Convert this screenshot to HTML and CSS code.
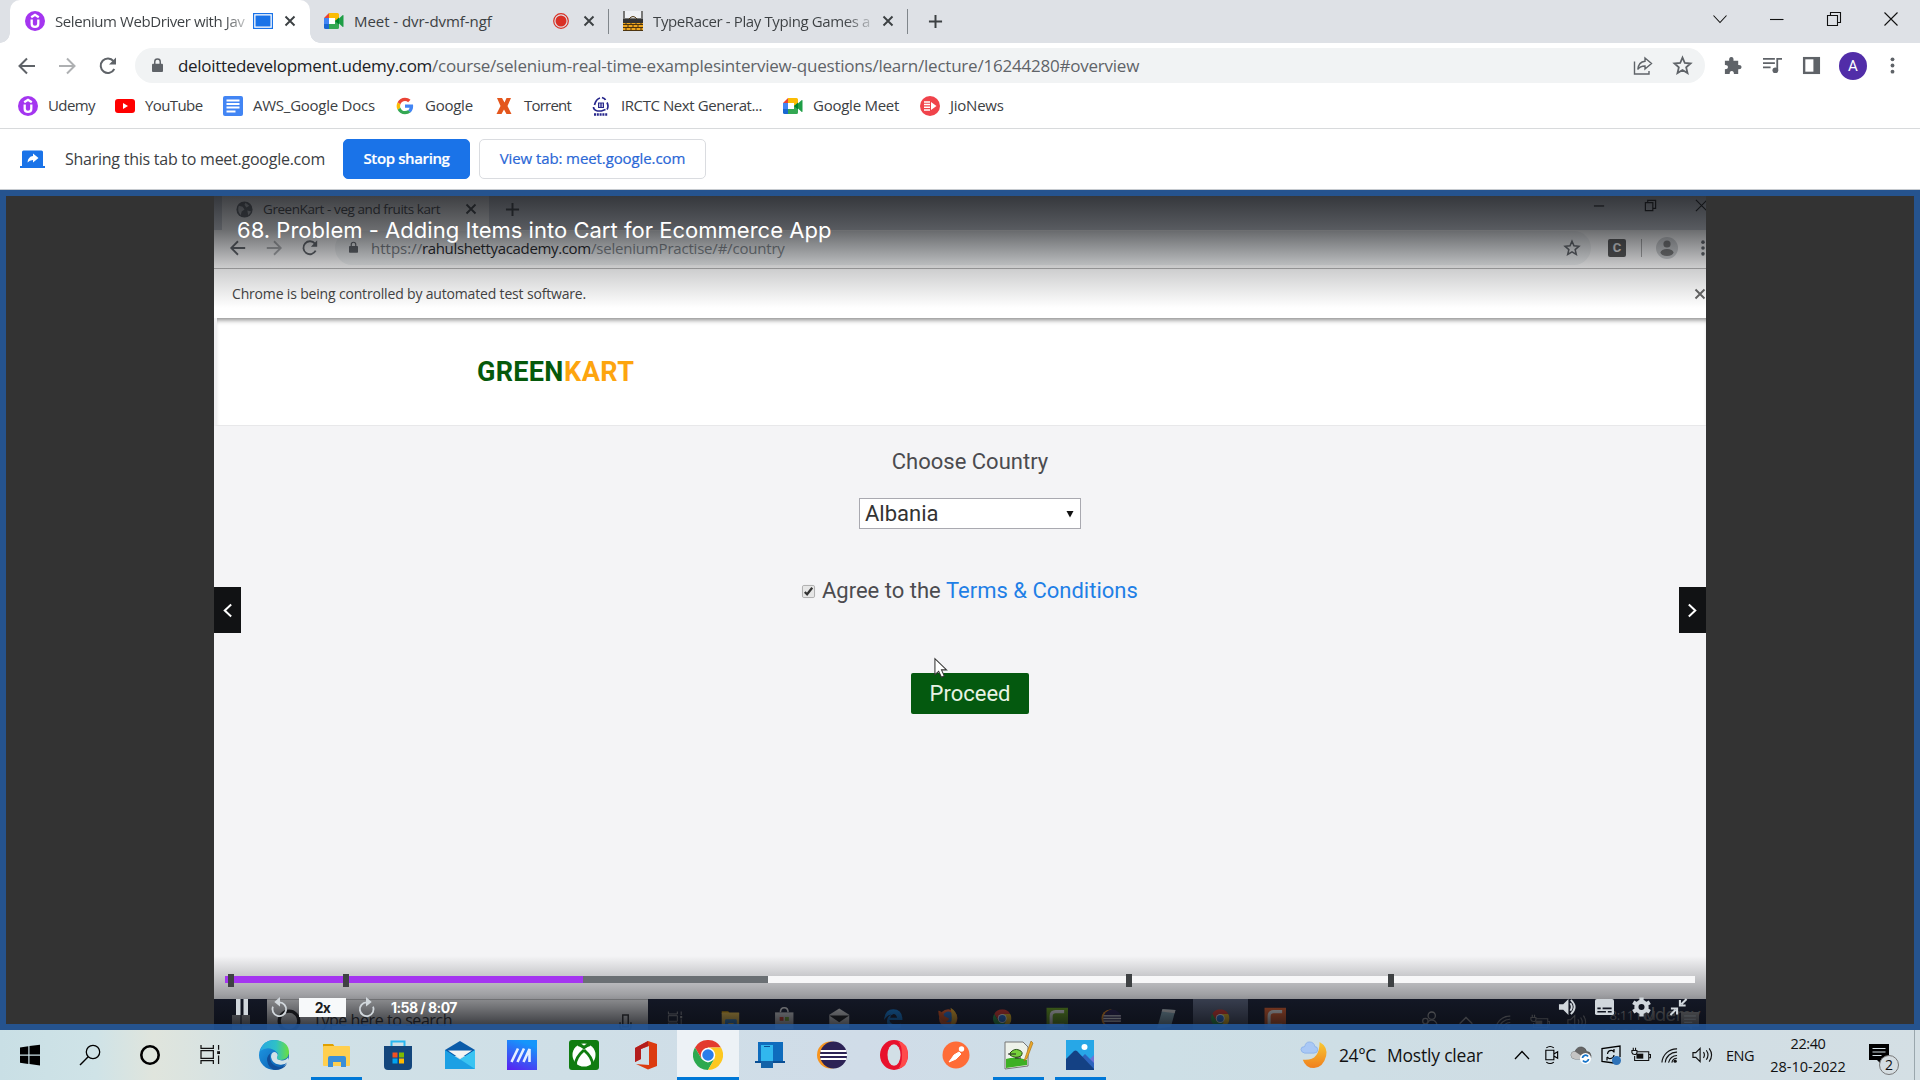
FILE: index.html
```html
<!DOCTYPE html>
<html lang="en">
<head>
<meta charset="utf-8">
<title>Selenium WebDriver with Java</title>
<link rel="stylesheet" href="styles.css">
</head>
<body>
<svg class="defs" width="0" height="0">
  <symbol id="udemy" viewBox="0 0 20 20"><circle cx="10" cy="10" r="10" fill="#a435f0"/><path d="M6.200 6.200 10 3.800l3.800 2.400M6.700 8.600v4.200c0 4.200 6.600 4.200 6.600 0V8.600" fill="none" stroke="#fff" stroke-width="2.300"/></symbol>
  <symbol id="close" viewBox="0 0 12 12"><path d="M1.5 1.5l9 9M10.5 1.5l-9 9" stroke="currentColor" stroke-width="1.9" fill="none"/></symbol>
  <symbol id="plus" viewBox="0 0 16 16"><path d="M8 1v14M1 8h14" stroke="currentColor" stroke-width="2.1"/></symbol>
  <symbol id="meet" viewBox="0 0 20 16"><path d="M0 5 5 0v5z" fill="#ea4335"/><path d="M5 0h8.500q1.500 0 1.500 1.500V8l-4 1V5H5z" fill="#fbbc04"/><path d="M0 5h5v6H0z" fill="#4285f4"/><path d="M0 11h5v5H1.500Q0 16 0 14.500z" fill="#1967d2"/><path d="M5 16v-5h6V8l4-1v7.500q0 1.500-1.500 1.500z" fill="#34a853"/><path d="M5 5h6v6H5z" fill="#fff"/><path d="M15 5.500 18.500 2.300q1-.6 1 .4v10.600q0 1-1 .4L15 10.500 11 8z" fill="#1e9e46"/><path d="M11 8l4-3.500v7z" fill="#00832d"/></symbol>
  <symbol id="back" viewBox="0 0 20 20"><path d="M18 10H3M10 2.500 2.500 10l7.500 7.500" fill="none" stroke="currentColor" stroke-width="2"/></symbol>
  <symbol id="fwd" viewBox="0 0 20 20"><path d="M2 10h15M10 2.500 17.500 10 10 17.500" fill="none" stroke="currentColor" stroke-width="2"/></symbol>
  <symbol id="reload" viewBox="0 0 20 20"><path d="M16.300 13A7.200 7.200 0 1 1 15.500 5.200" fill="none" stroke="currentColor" stroke-width="2"/><path d="M18 1.500V8.500H11z" fill="currentColor"/></symbol>
  <symbol id="lock" viewBox="0 0 12 16"><path d="M1 6h10q1 0 1 1v7q0 1-1 1H1q-1 0-1-1V7q0-1 1-1z" fill="currentColor"/><path d="M3 7V4a3 3 0 0 1 6 0v3" fill="none" stroke="currentColor" stroke-width="1.600"/></symbol>
  <symbol id="star" viewBox="0 0 20 20"><path d="M10 2.500 12.200 7.600 17.700 8.100 13.500 11.800 14.800 17.200 10 14.300 5.200 17.200 6.500 11.800 2.300 8.100 7.800 7.600z" fill="none" stroke="currentColor" stroke-width="1.700"/></symbol>
  <symbol id="chrome" viewBox="1 1 22 22"><path d="M2.470 6.500A11 11 0 0 1 21.530 6.500H12L7.240 14.750z" fill="#e33b2e"/><path d="M2.470 6.500 7.240 14.750 12 17.500l4.760-2.750L12 23A11 11 0 0 1 2.470 6.500z" fill="#2da94f"/><path d="M21.530 6.500A11 11 0 0 1 12 23l4.760-8.250L12 6.500z" fill="#fdc820"/><circle cx="12" cy="12" r="5.300" fill="#fff"/><circle cx="12" cy="12" r="4.200" fill="#2a7de9"/></symbol>
  <symbol id="eclipse" viewBox="0 0 30 30"><circle cx="13.500" cy="15" r="13.500" fill="#f7941e"/><circle cx="16.500" cy="15" r="13.500" fill="#2c2255"/><path d="M3.500 11h26M3 15h27M3.500 19h26" stroke="#fff" stroke-width="1.900"/></symbol>
  <symbol id="folder" viewBox="0 0 28 26"><path d="M1 2h10l2 3H1z" fill="#e0a000"/><rect x="1" y="4" width="27" height="20" rx="1" fill="#ffcf4f"/><path d="M6 25V16q0-2 2-2h14q2 0 2 2v9h-5v-5h-8v5z" fill="#3b8fd8"/></symbol>
  <symbol id="battery" viewBox="0 0 22 16"><path d="M6 4.500h13.500v9.500H4V9M19.500 7.500H21.500v3.500h-2M2.500 0v3M5 0v3M1 3h5.500v2.500q0 2-2.500 2T1 5.500z" fill="none" stroke="currentColor" stroke-width="1.200"/><path d="M6 6.500h7.500V12H6z" fill="currentColor"/></symbol>
  <symbol id="wifi" viewBox="0 0 18 18"><path d="M1 17A15.500 15.500 0 0 1 17 2.500M4.500 17A12 12 0 0 1 17 6M8 17a9 9 0 0 1 9-7.500M11.500 17a5.500 5.500 0 0 1 5.500-4.500" fill="none" stroke="currentColor" stroke-width="1.200"/><circle cx="15" cy="15.500" r="1.700" fill="currentColor"/></symbol>
  <symbol id="speaker" viewBox="0 0 22 18"><path d="M1 6.500h3L8.500 2v14L4 11.500H1zM12 6q2 3 0 6M15 4q3.500 5 0 10M18 2q5 7 0 14" fill="none" stroke="currentColor" stroke-width="1.200"/></symbol>
  <symbol id="taskview" viewBox="0 0 22 20"><path d="M1 0v3.500h13V0M1 20v-3.500h13V20M1 6h13v8H1zM19.500 0v5M19.500 11v9" fill="none" stroke="currentColor" stroke-width="1.300"/><path d="M18 6.500h3v3h-3z" fill="currentColor"/></symbol>
  <symbol id="note" viewBox="0 0 20 20"><path d="M0 0h20v16h-8v4l-4-4H0z" fill="currentColor"/><path d="M3.500 4.500h13M3.500 8h13M3.500 11.500h9" stroke="#d3e0e6" stroke-width="1.200"/></symbol>
</svg>

<header class="tabstrip">
  <div class="tab active">
    <svg class="fav"><use href="#udemy"/></svg>
    <span class="t tab-title fade tt1">Selenium WebDriver with Jav</span>
    <svg class="fav share" viewBox="0 0 20 16"><rect x=".6" y=".6" width="18.800" height="14.800" fill="#fff" stroke="#1a73e8" stroke-width="1.200"/><rect x="2.500" y="2.500" width="15" height="11" fill="#1a73e8"/></svg>
    <svg class="x"><use href="#close"/></svg>
  </div>
  <div class="tab second">
    <svg class="fav meet"><use href="#meet"/></svg>
    <span class="t tab-title tt2">Meet - dvr-dvmf-ngf</span>
    <svg class="rec" viewBox="0 0 16 16"><circle cx="8" cy="8" r="7.300" fill="none" stroke="#d93025" stroke-width="1.200"/><circle cx="8" cy="8" r="5.500" fill="#d93025"/></svg>
    <svg class="x"><use href="#close"/></svg>
  </div>
  <i class="sep"></i>
  <div class="tab third">
    <svg class="fav" viewBox="0 0 20 20"><rect width="20" height="20" fill="#777"/><path d="M2 0h16v7H2z" fill="#eef0f4"/><path d="M0 8h20v4H0z" fill="#333"/><path d="M0 12h20v8H0z" fill="#eda51d"/><path d="M6 8q4-5 8 0M0 13.500h20M0 16.500h20M0 19.500h20M3 12v2M8 12v2M13 12v2M18 12v2M5 14v3M10 14v3M15 14v3M3 17v3M8 17v3M13 17v3M18 17v3" fill="none" stroke="#4d3510"/></svg>
    <span class="t tab-title fade tt3">TypeRacer - Play Typing Games a</span>
    <svg class="x"><use href="#close"/></svg>
  </div>
  <i class="sep"></i>
  <svg class="new"><use href="#plus"/></svg>
  <div class="win">
    <svg viewBox="0 0 14 14"><path d="M.5 3.500 7 10.500 13.500 3.500" /></svg>
    <svg viewBox="0 0 14 14"><path d="M0 7.500h13.500"/></svg>
    <svg viewBox="0 0 14 14"><path d="M.5 3.500h10v10H.5zM3.500 3.500V.5h10v10h-3"/></svg>
    <svg viewBox="0 0 14 14"><path d="M.5.5l13 13M13.500.5l-13 13"/></svg>
  </div>
</header>

<nav class="toolbar">
  <svg class="nav"><use href="#back"/></svg>
  <svg class="nav dim"><use href="#fwd"/></svg>
  <svg class="nav"><use href="#reload"/></svg>
  <div class="omnibox">
    <svg class="lock"><use href="#lock"/></svg>
    <span class="t host">deloittedevelopment.udemy.com</span><span class="t path">/course/selenium-real-time-examplesinterview-questions/learn/lecture/16244280#overview</span>
    <svg class="tool share2" viewBox="0 0 20 20"><path d="M1.500 6v12.500h14.500V15.500" fill="none" stroke="#5f6368" stroke-width="1.400"/><path d="M12 2.500 18.500 8 12 13.500V10.500Q7 10.500 4.800 14 5.500 6.500 12 5.800z" fill="none" stroke="#5f6368" stroke-width="1.400"/></svg>
    <svg class="tool"><use href="#star"/></svg>
  </div>
  <div class="actions">
    <svg viewBox="0 0 20 20"><path d="M2 5h4.500q-.5-4 2.300-4T11 5h5v4.500q3.500-.3 3.500 2.300T16 14v5h-4.500q0-3.200-2.300-3.200T7 19H2v-5q3.200 0 3.200-2.300T2 9.500z" fill="#5f6368"/></svg>
    <svg viewBox="0 0 20 20"><path d="M0 3h12.500M0 7.500h12.500M0 12h8M15 15V3h5" fill="none" stroke="#5f6368" stroke-width="1.900"/><circle cx="13" cy="15" r="3" fill="#5f6368"/></svg>
    <svg viewBox="0 0 20 20"><path d="M1 1h18v18H1z" fill="#5f6368"/><path d="M3.500 3.500H12v13H3.500z" fill="#fff"/></svg>
    <span class="avatar">A</span>
    <svg viewBox="0 0 20 20" fill="#5f6368"><circle cx="10" cy="3.500" r="2"/><circle cx="10" cy="10" r="2"/><circle cx="10" cy="16.500" r="2"/></svg>
  </div>
</nav>

<nav class="bookmarks">
  <a class="b1"><svg class="fav"><use href="#udemy"/></svg><span class="t">Udemy</span></a>
  <a class="b2"><svg class="fav" viewBox="0 0 20 20"><rect y="3" width="20" height="14" rx="3" fill="#f00"/><path d="M8 7v6l5-3z" fill="#fff"/></svg><span class="t">YouTube</span></a>
  <a class="b3"><svg class="fav" viewBox="0 0 20 20"><rect width="20" height="20" rx="2" fill="#4285f4"/><path d="M3.500 4.500h13M3.500 8h13M3.500 11.500h13M3.500 15.500h9" stroke="#fff" stroke-width="1.800"/></svg><span class="t">AWS_Google Docs</span></a>
  <a class="b4"><svg class="fav" viewBox="0 0 48 48"><path fill="#ea4335" d="M24 12c3 0 5.500 1 7.500 2.900l5.700-5.700C33.700 6 29.200 4 24 4 16.200 4 9.400 8.500 6.200 15l6.600 5.100C14.400 15.400 18.800 12 24 12z"/><path fill="#4285f4" d="M43.500 24.500c0-1.500-.1-2.800-.4-4.100H24v8h11c-.5 2.500-1.900 4.700-4 6.200l6.400 5c3.800-3.500 6.100-8.700 6.100-15.100z"/><path fill="#fbbc05" d="M12.800 28.100a12 12 0 0 1 0-8L6.200 15a20 20 0 0 0 0 18.200z"/><path fill="#34a853" d="M24 44c5.400 0 9.900-1.800 13.200-4.800l-6.400-5c-1.800 1.200-4 1.900-6.800 1.900-5.200 0-9.600-3.500-11.200-8.200l-6.600 5.100C9.400 39.500 16.200 44 24 44z"/></svg><span class="t">Google</span></a>
  <a class="b5"><svg class="fav" viewBox="0 0 20 20"><path d="M3 2h5l2.500 4.500L12.500 2H17l-3.500 8 4 8h-5L10 13.500 7.500 18H2.500L6.500 10z" fill="#e4561c"/></svg><span class="t">Torrent</span></a>
  <a class="b6"><svg class="fav" viewBox="0 0 20 20"><path d="M3.500 9Q5 3 9 2M11 1.500q3 1 3.500 2.500M16 6.500q2 4 0 7M2.500 11q0 3 4 4h4l4-1.500" fill="none" stroke="#27278c" stroke-width="1.700"/><path d="M7 6.500h6v5.500H7z" fill="#27278c"/><path d="M8.800 7.500v3.500M11.200 7.500v3.500" stroke="#fff"/><path d="M3 18.500h14" stroke="#27278c" stroke-width="2.500" stroke-dasharray="2 .8"/></svg><span class="t">IRCTC Next Generat...</span></a>
  <a class="b7"><svg class="fav meet"><use href="#meet"/></svg><span class="t">Google Meet</span></a>
  <a class="b8"><svg class="fav" viewBox="0 0 20 20"><circle cx="10" cy="10" r="10" fill="#f0434b"/><path d="M4 6h6M4 8.600h6M4 11.300h6M4 14h6" stroke="#fff" stroke-width="1.500"/><path d="M11 6v8l5.500-4z" fill="#fff"/></svg><span class="t">JioNews</span></a>
</nav>

<section class="infobar">
  <svg class="sharing" viewBox="0 0 25 18"><path d="M3.500.5h18q1.500 0 1.500 1.500v14H2V2Q2 .5 3.500.5zM0 16h25v2H0z" fill="#1a73e8"/><path d="M13 3.500 18.500 8 13 12.500V10Q9.500 10 7.500 12.500 8 6.500 13 6z" fill="#fff"/></svg>
  <span class="t info-text">Sharing this tab to meet.google.com</span>
  <span class="btn primary"><span class="t">Stop sharing</span></span>
  <span class="btn"><span class="t">View tab: meet.google.com</span></span>
</section>

<main class="viewport">
  <div class="player">
    <div class="v-tabs">
      <svg class="v-globe" viewBox="0 0 20 20"><circle cx="10" cy="10" r="8.500" fill="#5f6368"/><path d="M4 6l4 1 2 3-3 2-1 4q-4-5-2-10zM11 3l4 3-3 2-2-3zM13 11l4 1-3 4z" fill="#c7cacd"/></svg>
      <span class="t">GreenKart - veg and fruits kart</span>
      <svg class="x"><use href="#close"/></svg>
      <svg class="new"><use href="#plus"/></svg>
      <div class="v-win">
        <svg viewBox="0 0 14 14"><path d="M1 7.500h11"/></svg>
        <svg viewBox="0 0 14 14"><path d="M1.500 4h8v8.500h-8zM4 4V1.500h8.500v8.500h-3"/></svg>
        <svg viewBox="0 0 14 14"><path d="M1 1l12 12M13 1l-12 12"/></svg>
      </div>
    </div>
    <div class="v-bar">
      <svg><use href="#back"/></svg><svg class="dim"><use href="#fwd"/></svg><svg><use href="#reload"/></svg>
      <div class="v-omni">
        <svg class="lock"><use href="#lock"/></svg>
        <span class="t scheme">https://</span><span class="t dark">rahulshettyacademy.com</span><span class="t rest-url">/seleniumPractise/#/country</span>
        <svg class="v-star"><use href="#star"/></svg>
      </div>
      <b class="badge">C</b><i class="v-sep"></i>
      <svg class="v-user" viewBox="0 0 22 22"><circle cx="11" cy="11" r="11" fill="#d0d2d4"/><circle cx="11" cy="7" r="3.600" fill="#777"/><ellipse cx="11" cy="15.500" rx="6.500" ry="3.500" fill="#777"/></svg>
      <svg class="v-dots" viewBox="0 0 20 20" fill="#5f6368"><circle cx="10" cy="3.500" r="2"/><circle cx="10" cy="10" r="2"/><circle cx="10" cy="16.500" r="2"/></svg>
    </div>
    <div class="v-info"><span class="t">Chrome is being controlled by automated test software.</span><svg class="x"><use href="#close"/></svg></div>
    <div class="v-head"><span class="t g">GREEN</span><span class="t k">KART</span></div>
    <div class="v-page">
      <p class="t choose">Choose Country</p>
      <div class="select"><span class="t">Albania</span><svg viewBox="0 0 8 8"><path d="M.5 1h7L4 7.500z" fill="#111"/></svg></div>
      <div class="agree"><svg viewBox="0 0 14 14"><rect x=".5" y=".5" width="13" height="13" rx="1.500" fill="#e6e6e6" stroke="#aaa"/><path d="M3 7.500 5.500 10 11 3" fill="none" stroke="#333" stroke-width="2.400"/></svg><span class="t">Agree to the</span><span class="t link">Terms &amp; Conditions</span></div>
      <div class="proceed"><span class="t">Proceed</span></div>
    </div>
    <div class="v-task">
      <div class="v-start"><svg viewBox="0 0 18 20" fill="#aaa"><path d="M0 0h8.400v9.400H0zM9.600 0H18v9.400H9.600zM0 10.600h8.400V20H0zM9.600 10.600H18V20H9.600z"/></svg></div>
      <div class="v-search"><svg class="v-cort" viewBox="0 0 22 22"><circle cx="11" cy="11" r="9" fill="none" stroke="#222" stroke-width="3"/></svg><span class="t">Type here to search</span>
        <svg class="v-mic" viewBox="0 0 14 22"><path d="M4 1h6v13H4zM1 9v5q0 4 6 4t6-4V9M7 18v4" fill="none" stroke="#333" stroke-width="1.600"/></svg></div>
      <div class="v-apps">
        <svg viewBox="0 0 30 30"><use href="#taskview" x="5" y="5" width="20" height="20" color="#aaa"/></svg>
        <svg viewBox="0 0 30 30"><use href="#folder" x="3" y="3" width="24" height="24"/></svg>
        <svg viewBox="0 0 30 30"><path d="M3 7h24v22H3z" fill="#ddd"/><path d="M10 7q0-6 5-6t5 6" fill="none" stroke="#ddd" stroke-width="2"/><path d="M9 13h5v5H9z" fill="#e8412a"/><path d="M16 13h5v5h-5z" fill="#7db72f"/></svg>
        <svg viewBox="0 0 30 30"><path d="M2 10 15 2l13 8v18H2z" fill="#ddd"/><path d="M2 11h26L15 20z" fill="#222"/></svg>
        <svg viewBox="0 0 30 30"><path d="M3 17Q4 3 15 3q12 0 12 14H10q1 8 15 5v5Q5 31 7 17q1-7 8-7Q8 9 3 17zM11 14h9q-1-5-4.500-5T11 14z" fill="#1583e0"/></svg>
        <svg viewBox="0 0 30 30"><circle cx="15" cy="15" r="12" fill="#f4632a"/><circle cx="15" cy="13" r="7" fill="#2d79d8"/><path d="M18 1q10 6 8 16-2 8-10 10 6-8 2-26z" fill="#f9b62a"/><path d="M2 5q4 0 8 7l6 3q-3 7-9 3Q2 14 2 5z" fill="#e9581e"/></svg>
        <svg viewBox="0 0 30 30"><use href="#chrome" x="3" y="3" width="24" height="24"/></svg>
        <svg viewBox="0 0 30 30"><path d="M1 1h28v28H1z" fill="#6ca81c"/><path d="M24 6H13q-6 0-6 6v12h17" fill="none" stroke="#eee" stroke-width="4"/></svg>
        <svg viewBox="0 0 30 30"><use href="#eclipse" x="2" y="2" width="26" height="26"/></svg>
        <svg viewBox="0 0 30 30"><path d="M10 3l17 1-6 22-18 2z" fill="#8fb5c4"/><path d="M10 3l17 1-1 4-17-2z" fill="#ddd"/></svg>
        <svg class="on" viewBox="0 0 30 30"><use href="#chrome" x="3" y="3" width="24" height="24"/></svg>
        <svg viewBox="0 0 30 30"><path d="M1 1h28v28H1z" fill="#e8622c"/><path d="M24 6H13q-6 0-6 6v12h17" fill="none" stroke="#eee" stroke-width="4"/></svg>
      </div>
      <div class="v-tray">
        <svg viewBox="0 0 22 18"><circle cx="14" cy="2" r="4" fill="none" stroke="#aaa" stroke-width="1.400"/><circle cx="7" cy="8" r="3" fill="none" stroke="#aaa" stroke-width="1.400"/><path d="M9 13q0-6 5-6t6 6M2 17q0-5 5-5" fill="none" stroke="#aaa" stroke-width="1.400"/></svg>
        <svg viewBox="0 0 22 18"><path d="M4 11l7-7 7 7" fill="none" stroke="#aaa" stroke-width="1.600"/></svg>
        <svg viewBox="0 0 22 18"><use href="#wifi" width="18" height="18" x="2"/></svg>
        <svg viewBox="0 0 22 18"><use href="#battery" width="22" height="18"/></svg>
        <svg viewBox="0 0 22 18"><use href="#speaker" width="22" height="18"/></svg>
        <span class="v-clock"><span class="t">8:11 PM</span><span class="t">9/12/2019</span></span>
        <span class="t mark">Udemy</span>
        <svg class="v-note"><use href="#note"/></svg>
      </div>
    </div>
    <div class="shade-top"></div>
    <div class="shade-bottom"></div>
    <h1 class="t title">68. Problem - Adding Items into Cart for Ecommerce App</h1>
    <svg class="cursor" viewBox="0 0 15 22"><path d="M1 1v17l4-3.500 3 6.500 3-1.500-3-6.500h5.500z" fill="#fff" stroke="#333" stroke-width="1.100"/></svg>
    <span class="side prev"><svg viewBox="0 0 12 16"><path d="M10 1.500 3 8l7 6.500" fill="none" stroke="#fff" stroke-width="2.200"/></svg></span>
    <span class="side next"><svg viewBox="0 0 12 16"><path d="M2 1.500 9 8l-7 6.500" fill="none" stroke="#fff" stroke-width="2.200"/></svg></span>
    <div class="controls">
      <div class="track"><i class="played"></i><i class="loaded"></i><i class="rest"></i>
        <b class="mk m1"></b><b class="mk m2"></b><b class="mk m3"></b><b class="mk m4"></b></div>
      <div class="buttons">
        <svg class="pause" viewBox="0 0 12 16"><path d="M0 0h4.500v16H0zM7.500 0H12v16H7.500z" fill="#d1d7dc"/></svg>
        <svg class="rew" viewBox="0 0 18 22"><path d="M2 10A7.300 7.300 0 1 0 9 5.500" fill="none" stroke="#d1d7dc" stroke-width="1.900"/><path d="M9.500 0v10L3.500 5.300z" fill="#d1d7dc"/></svg>
        <span class="speed"><span class="t">2x</span></span>
        <svg class="rew" viewBox="0 0 18 22"><path d="M16 10A7.300 7.300 0 1 1 9 5.500" fill="none" stroke="#d1d7dc" stroke-width="1.900"/><path d="M8.500 0v10l6-4.700z" fill="#d1d7dc"/></svg>
        <span class="t time">1:58 / 8:07</span>
        <span class="right">
          <svg viewBox="0 0 20 20"><path d="M1 7h4.500L11 1.500v17L5.500 13H1z" fill="#d1d7dc"/><path d="M13 6q3 4 0 8M13.500 2.500q8 7.500 0 15" fill="none" stroke="#d1d7dc" stroke-width="2"/></svg>
          <svg viewBox="0 0 20 20"><rect y="1.500" width="20" height="17" rx="2" fill="#d1d7dc"/><path d="M2.500 11.500h3.500M8 11.500h9.500M2.500 15h9M13.500 15h4" stroke="#111520" stroke-width="1.800"/></svg>
          <svg viewBox="0 0 20 20"><circle cx="10" cy="10" r="5.300" fill="none" stroke="#d1d7dc" stroke-width="4.600"/><path d="M10 0v20M1.300 5l17.400 10M1.300 15 18.700 5" stroke="#d1d7dc" stroke-width="4.500"/><circle cx="10" cy="10" r="3.200" fill="#111520"/></svg>
          <svg viewBox="0 0 20 20"><path d="M18.500 1.500 13 7M11.500 2.500v6h6M1.500 18.500 7 13M2 11.500h6.500V18" fill="none" stroke="#d1d7dc" stroke-width="2.200"/></svg>
        </span>
      </div>
    </div>
  </div>
  <div class="frame"></div>
</main>

<footer class="taskbar">
  <div class="apps">
    <span><svg viewBox="0 0 30 30"><path d="M5 7.500 13.300 6.300V14.500H5zM14.500 6.100 25 4.800V14.500H14.500zM5 15.700h8.300v8.200L5 22.700zM14.500 15.700H25v9.900l-10.500-1.500z"/></svg></span>
    <span><svg viewBox="0 0 30 30"><circle cx="18" cy="12" r="6.700" fill="none" stroke="#000" stroke-width="1.300"/><path d="M13.200 16.800 5 25" stroke="#000" stroke-width="1.400"/></svg></span>
    <span><svg viewBox="0 0 30 30"><circle cx="15" cy="15" r="8.700" fill="none" stroke="#000" stroke-width="2.600"/></svg></span>
    <span><svg viewBox="0 0 30 30"><use href="#taskview" x="5" y="5" width="21" height="19"/></svg></span>
    <span class="wide"><svg viewBox="0 0 30 30"><defs><linearGradient id="e1" x2="1"><stop stop-color="#29a8e0"/><stop offset=".55" stop-color="#2ec0c8"/><stop offset="1" stop-color="#6be03c"/></linearGradient><linearGradient id="e2" x2="1" y2="1"><stop stop-color="#1f9de8"/><stop offset="1" stop-color="#0a55a8"/></linearGradient></defs><circle cx="15" cy="15" r="15" fill="url(#e2)"/><path d="M1 11Q4 0 15.500 0 30 1 30 13q-1 7-8 7-5 0-4-3 2-3-.5-5Q10 5 1 11z" fill="url(#e1)"/><path d="M11 15q-1 9 8 12 5 1 9-3-4 6-12 6Q9 28 8 20q0-5 5-8-2 2-2 3z" fill="#104f9b"/><path d="M12 17q0-5 4-5 4 2 2 5-1 3 5 3.500 4 0 6-3 1 3 0 4.500-4 3.500-9 2.500-7-1-8-7.500z" fill="#d2e2e8"/></svg></span>
    <span class="wide run"><svg viewBox="0 0 30 30"><use href="#folder" x="1" y="2" width="28" height="26"/></svg></span>
    <span class="wide"><svg viewBox="0 0 30 30"><path d="M8.500 6V1.500h13V6" fill="none" stroke="#29b6f0" stroke-width="2"/><path d="M1 6h28v20q0 4-4 4H5q-4 0-4-4z" fill="#14467c"/><path d="M9.500 12.500h5v5h-5z" fill="#f25022"/><path d="M16 12.500h5v5h-5z" fill="#7fba00"/><path d="M9.500 18.500h5v5h-5z" fill="#00a4ef"/><path d="M16 18.500h5v5h-5z" fill="#ffb900"/></svg></span>
    <span class="wide"><svg viewBox="0 0 30 30"><path d="M0 10 15 1l15 9v6H0z" fill="#0b5ba8"/><path d="M0 10l15 9.500L30 10v19H0z" fill="#1ca0e4"/><path d="M3 10.500h24L15 18.500z" fill="#f4f4f4"/><path d="M30 10v19L13 18l2 1.500z" fill="#3ac4f2"/></svg></span>
    <span class="wide"><svg viewBox="0 0 30 30"><defs><linearGradient id="m1" x2=".4" y1="1" y2="0"><stop stop-color="#5b1ff0"/><stop offset="1" stop-color="#1596fb"/></linearGradient></defs><path d="M0 0h30v30H0z" fill="url(#m1)"/><path d="M4.500 22 11 8.500M10.500 22 17 8.500M16.500 22 22.500 9v13" fill="none" stroke="#e6f0ff" stroke-width="2.600"/></svg></span>
    <span class="wide"><svg viewBox="0 0 30 30"><rect width="30" height="30" rx="3" fill="#107c10"/><circle cx="15" cy="15" r="11.500" fill="#fff"/><path d="M15 10Q6 18 6.500 25M15 10q9 8 8.500 15M9 4.500q3 .5 6 3 3-2.500 6-3" fill="none" stroke="#107c10" stroke-width="3"/></svg></span>
    <span class="wide"><svg viewBox="0 0 30 30"><path d="M4 8 17 1l9 3v22l-9 3.500L5 24l13 1V6l-8 3v10l-6 3z" fill="#dc3b10"/><path d="M4 8 17 1v5l-7 3v10l-6 3z" fill="#b31d1d"/></svg></span>
    <span class="wide run cur"><svg viewBox="0 0 30 30"><use href="#chrome" width="30" height="30"/></svg></span>
    <span class="wide"><svg viewBox="0 0 30 30"><path d="M3 2h25v19H3z" fill="#0f6cbd"/><path d="M16 21h14v2H16z" fill="#0a4f94"/><path d="M0 21h6v2H0z" fill="#0a4f94"/><path d="M6 5h12v23H6z" fill="#31b7ee"/><path d="M6 21h12v7H6z" fill="#1463a8"/><path d="M9 6.500h6" stroke="#0a4f94"/></svg></span>
    <span class="wide"><svg viewBox="0 0 30 30"><use href="#eclipse" width="30" height="30"/></svg></span>
    <span class="wide"><svg viewBox="0 0 30 30"><ellipse cx="15" cy="15" rx="14" ry="15" fill="#e8112d"/><path d="M19 1q10 2 10 14t-10 14q4-4 4-14T19 1z" fill="#ff4b4b"/><ellipse cx="15" cy="15" rx="6.500" ry="10.800" fill="#d2dfe6"/></svg></span>
    <span class="wide"><svg viewBox="0 0 30 30"><circle cx="15" cy="15" r="13.500" fill="#ff6c37"/><path d="M8 22q3-4 5-7l5-3 2 2-5 5z" fill="#fff" stroke="#fff"/><circle cx="20.500" cy="9" r="2.700" fill="#fff"/></svg></span>
    <span class="wide run"><svg viewBox="0 0 30 30"><path d="M2 2h18l5 5v19L2 29z" fill="#eef2ea" stroke="#777"/><path d="M3 19q10-3 21 1v5L3 28z" fill="#3db024"/><path d="M7 13q4-5 9-3t2 6q-6 3-11-1z" fill="#77d03b" stroke="#274d16"/><path d="M5 14h8M12 18h6" stroke="#222"/><path d="M28 1 22 18l-1 3 3-2.500L30 3z" fill="#eda82a" stroke="#9a6a12" stroke-width=".6"/></svg></span>
    <span class="wide run"><svg viewBox="0 0 30 30"><path d="M1 0h28v30H1z" fill="#27a7e7"/><path d="M29 15v15H14z" fill="#6d75d8"/><path d="M16 18l4-4 9 9v7H14z" fill="#2d64bd"/><path d="M1 19l8-8q1.500-1 3 0l17 18v1H1z" fill="#144184"/><circle cx="19.500" cy="7" r="3" fill="#fff"/></svg></span>
  </div>
  <div class="tray">
    <svg class="moon" viewBox="0 0 30 30"><defs><linearGradient id="mo" y2="1" x2="0"><stop stop-color="#f8c933"/><stop offset="1" stop-color="#f07f1e"/></linearGradient></defs><path d="M21 1q9 5 7 15-3 12-13 13-9 0-12-9 18 2 18-19z" fill="url(#mo)"/><path d="M5 13q-4-1-4-4 0-3 4-3 1-5 5-5 5 0 6 5 3 0 3 3.500T15 13z" fill="#a9c8f5" stroke="#7fa9e8" stroke-width=".7"/></svg>
    <span class="t temp">24°C</span><span class="t clear">Mostly clear</span>
    <svg class="s16" viewBox="0 0 16 16"><path d="M1 12l7-7.500L15 12" fill="none" stroke="#000" stroke-width="1.300"/></svg>
    <svg class="s18" viewBox="0 0 18 20"><path d="M3 5h8.500v10H3zM11.500 9l4-2.500v7l-4-2.500M3.500 2.500q4-3 8 0M3.500 17.500q4 3 8 0" fill="none" stroke="#000" stroke-width="1.200"/></svg>
    <svg class="s20" viewBox="0 0 20 18"><path d="M4 13q-4-.5-4-4t4-3.500Q6 .5 11 1q4 1 4.500 4.500 4 0 4.500 4T16 13z" fill="#666" stroke="#444" stroke-width=".6"/><path d="M4 13q-4-.5-4-4t4-3.500L15 13z" fill="#c4c4c4"/><circle cx="14.500" cy="12.500" r="5.500" fill="#fff"/><path d="M11.500 12a3 3 0 0 1 5.500-1.500M17.500 13a3 3 0 0 1-5.500 1.500" fill="none" stroke="#1472c8" stroke-width="1.800"/></svg>
    <svg class="s20" viewBox="0 0 20 20"><path d="M19 12V1L1 3.500v13L13 18" fill="none" stroke="#000" stroke-width="1.300"/><path d="M6.500 9q.5-4 5-3.500l1.500 1.500M13 4v3.500M13 10q-.5 4-5 3.500L6 12M6 15.500V12" fill="none" stroke="#000" stroke-width="1.200"/><circle cx="15.500" cy="15.500" r="4.500" fill="#2e72b8"/></svg>
    <svg class="s20 bat"><use href="#battery"/></svg>
    <svg class="s18 net"><use href="#wifi"/></svg>
    <svg class="s22"><use href="#speaker"/></svg>
    <span class="t eng">ENG</span>
    <span class="clock"><span class="t c1">22:40</span><span class="t c2">28-10-2022</span></span>
    <span class="notif"><svg><use href="#note"/></svg><b>2</b></span>
    <i class="peek"></i>
  </div>
</footer>
</body>
</html>
```
FILE: styles.css
```css
* { box-sizing: border-box; }
body { margin: 0; width: 1920px; height: 1080px; overflow: hidden; display: flex; flex-direction: column; background: #fff; color: #3c4043; font-family: "Open Sans", "Noto Sans", sans-serif; font-size: 15px; }
svg { display: block; flex: none; overflow: visible; }
.defs { position: absolute; }
.t { white-space: nowrap; flex: none; letter-spacing: -.25px; }
.fav { width: 20px; height: 20px; }
.fav.meet { height: 16px; }
.x { width: 12px; height: 12px; color: #3c4043; }
.sep { width: 1px; height: 25px; background: #80868b; }

.tabstrip { height: 43px; flex: none; display: flex; align-items: center; background: #dee1e6; padding-left: 10px; }
.tab { display: flex; align-items: center; height: 43px; padding-bottom: 1px; }
.tab.active { width: 300px; background: #fff; border-radius: 10px 10px 0 0; padding-left: 15px; position: relative; }
.tab.active::before, .tab.active::after { content: ""; position: absolute; bottom: 0; width: 10px; height: 10px; }
.tab.active::before { left: -10px; background: radial-gradient(circle at 0 0, #dee1e6 9.5px, #fff 10px); }
.tab.active::after { right: -10px; background: radial-gradient(circle at 100% 0, #dee1e6 9.5px, #fff 10px); }
.tab-title { margin-left: 10px; line-height: 22px; padding-bottom: 1px; }
.fade { background: linear-gradient(90deg, #3c4043 88%, rgba(60,64,67,.25)); -webkit-background-clip: text; background-clip: text; color: transparent; }
.tt1 { width: 192px; letter-spacing: -.42px; }
.share { width: 20px; height: 16px; margin: 0 11px 0 6px; }
.tab.second { width: 298px; padding-left: 14px; }
.tt2 { width: 199px; letter-spacing: -.05px; }
.rec { width: 16px; height: 16px; margin-right: 14px; }
.tab.third { width: 298px; padding-left: 14px; }
.tt3 { width: 217px; margin-right: 12px; letter-spacing: -.38px; }
.new { width: 15px; height: 15px; color: #3c4043; margin-left: 20px; }
.win { margin-left: auto; display: flex; gap: 43px; padding: 0 22px 6px 0; }
.win svg { width: 14px; height: 14px; fill: none; stroke: #111; stroke-width: 1.1; }

.toolbar { height: 45px; flex: none; display: flex; align-items: center; padding: 0 0 0 17px; color: #5f6368; }
.nav { width: 20px; height: 20px; margin-right: 20px; }
.nav:nth-child(3) { margin: 0 19px 0 1px; }
.dim { opacity: .5; }
.omnibox { width: 1570px; height: 35px; margin-left: -2px; background: #f1f3f4; border-radius: 18px; display: flex; align-items: center; padding-left: 17px; font-size: 17px; color: #5f6368; }
.lock { width: 11px; height: 15px; margin-right: 15px; }
.host { color: #202124; width: 254px; letter-spacing: -.3px; }
.path { width: 707px; letter-spacing: -.22px; }
.tool { width: 21px; height: 21px; }
.share2 { width: 20px; margin: 0 19px 0 auto; }
.omnibox .tool:last-child { margin-right: 12px; }
.actions { display: flex; align-items: center; margin-left: 18px; gap: 20px; }
.actions svg { width: 19px; height: 19px; }
.actions svg:first-child { margin-right: 1px; }
.avatar { width: 28px; height: 28px; margin: 0 -4px 0 -2px; border-radius: 50%; background: #512da8; color: #fff; font: 15px/28px Roboto, sans-serif; text-align: center; }

.bookmarks { height: 41px; flex: none; display: flex; align-items: center; padding: 0 0 4px 18px; border-bottom: 1px solid #d8dadc; }
.bookmarks a { display: flex; align-items: center; gap: 10px; flex: none; }
.bookmarks .t { padding-bottom: 2px; }
.b1 { width: 97px; } .b2 { width: 108px; } .b3 { width: 172px; } .b4 { width: 99px; } .b5 { width: 97px; } .b6 { width: 192px; } .b7 { width: 137px; }
.b1 .t, .b2 .t { letter-spacing: -.6px; }
.b5 .t { letter-spacing: -.79px; }
.b6 .t { letter-spacing: -.42px; }

.infobar { height: 61px; flex: none; display: flex; align-items: center; padding-left: 20px; border-bottom: 1px solid #c6cacf; }
.sharing { width: 25px; height: 18px; }
.info-text { margin-left: 20px; width: 278px; font-size: 16px; }
.btn { height: 40px; width: 227px; border: 1px solid #dadce0; border-radius: 5px; color: #2a67d6; display: flex; align-items: center; justify-content: center; margin-right: 9px; padding-bottom: 2px; font-weight: 500; -webkit-text-stroke: .2px; }
.btn .t { letter-spacing: -.1px; }
.btn.primary { width: 127px; background: #1a73e8; border-color: #1a73e8; color: #fff; font-weight: 600; }
.btn.primary .t { letter-spacing: -.38px; }

.viewport { position: relative; height: 840px; flex: none; background: #333; padding: 6px 214px 0; }
.frame { position: absolute; inset: 0; border: 6px solid rgba(35, 86, 152, .9); pointer-events: none; }
.player { position: relative; width: 1492px; height: 834px; overflow: hidden; background: #f4f4f6; display: flex; flex-direction: column; }
.v-tabs { height: 34px; flex: none; display: flex; align-items: center; padding: 0 0 8px 21px; color: #3c4043; font-size: 13.5px; background: linear-gradient(#fff, #fff) 8px 0 / 267px 34px no-repeat, #cdd1d8; }
.v-globe { width: 19px; height: 19px; margin-right: 9px; }
.v-tabs .t { width: 202px; letter-spacing: -.43px; padding-bottom: 1px; }
.v-tabs .new { margin-left: 28px; }
.v-win { margin-left: auto; display: flex; gap: 38px; margin-right: -2px; padding-bottom: 7px; }
.v-win svg { width: 13px; height: 13px; fill: none; stroke: #111; stroke-width: 1.3; }
.v-bar { height: 39px; flex: none; display: flex; align-items: center; padding: 0 0 3px 15px; color: #5f6368; background: #fff; border-bottom: 1px solid #b5b5b5; font-size: 15px; }
.v-bar > svg { width: 18px; height: 18px; margin-right: 18px; }
.v-omni { width: 1256px; height: 34px; margin-left: -2px; border-radius: 17px; background: #f1f3f4; display: flex; align-items: center; padding-left: 14px; flex: none; }
.v-omni .lock { width: 9px; height: 13px; margin-right: 13px; }
.scheme { width: 51px; letter-spacing: 0; color: #777c82; }
.v-omni .dark { width: 169px; color: #202124; letter-spacing: -.35px; }
.rest-url { letter-spacing: -.2px; color: #80868b; }
.v-star { width: 18px; height: 18px; margin: 0 10px 0 auto; }
.badge { flex: none; width: 18px; height: 18px; margin-left: 17px; background: #555; color: #eee; font: bold 13px/18px Roboto, sans-serif; text-align: center; border-radius: 2px; }
.v-sep { flex: none; width: 1px; height: 18px; background: #aaa; margin: 0 14px 0 15px; }
.v-bar > .v-user { width: 22px; height: 22px; margin-right: 16px; }
.v-bar > .v-dots { margin: 0; }
.v-info { height: 49px; flex: none; display: flex; align-items: center; justify-content: space-between; padding: 0 0 0 18px; background: #fff; color: #444; font-size: 14px; }
.v-info .t { letter-spacing: -.17px; }
.v-info .x { margin-right: 0; color: #666; }
.v-head { height: 108px; flex: none; background: #fff; border-left: 3px solid #f0f0f2; border-bottom: 1px solid #e8e8ea; box-shadow: inset 0 5px 5px -3px #888; display: flex; align-items: center; padding: 0 0 0 260px; font: bold 27px Roboto, sans-serif; }
.g { color: #05590b; width: 87px; letter-spacing: .3px; } .k { color: #fda50f; letter-spacing: .5px; }
.v-page { flex: 1; background: #f4f4f6; padding-left: 20px; display: flex; flex-direction: column; align-items: center; font: 22px/26px Roboto, sans-serif; color: #4b4b4f; }
.v-page .t { letter-spacing: 0; }
.v-page .choose { margin: 23px 0 23px; }
.select { width: 222px; height: 31px; background: #fff; border: 1px solid #a9a9b0; display: flex; align-items: center; justify-content: space-between; padding: 0 6px 0 5px; color: #333; }
.select svg { width: 8px; height: 8px; }
.agree { margin-top: 49px; display: flex; align-items: center; }
.agree svg { width: 13px; height: 13px; margin-right: 7px; }
.agree .t { width: 124px; } .agree .link { width: 192px; color: #1f7fe6; }
.proceed { margin-top: 69px; width: 118px; height: 41px; background: #04590f; border-radius: 2px; color: #e8f3e4; display: flex; align-items: center; justify-content: center; }
.v-task { height: 31px; flex: none; display: flex; background: #1a2033; overflow: hidden; align-items: flex-start; }
.v-start { width: 53px; height: 31px; padding: 16px 0 0 18px; }
.v-start svg { width: 18px; height: 20px; }
.v-search { width: 381px; height: 31px; background: #e8e8e8; border-top: 1px solid #bbb; display: flex; align-items: flex-start; padding: 9px 16px 0 10px; font-size: 16px; color: #333; }
.v-cort { width: 24px; height: 24px; margin-right: 12px; }
.v-search .t { letter-spacing: -.43px; margin-top: -1px; line-height: 24px; }
.v-mic { width: 13px; height: 20px; margin: 5px 0 0 auto; }
.v-apps { display: flex; }
.v-apps svg { width: 54.500px; height: 31px; padding: 8px 13.500px 0; }
.v-apps svg.on { background: #59627a; }
.v-tray { position: relative; display: flex; margin-left: auto; padding: 14px 9px 0 0; color: #999; font-size: 13px; }
.v-tray svg { width: 20px; height: 18px; margin-right: 17px; }
.v-clock { display: flex; flex-direction: column; align-items: center; line-height: 18px; width: 57px; margin-top: -7px; }
.v-clock .t { letter-spacing: -.4px; }
.v-tray .mark { width: 55px; margin: -8px 0 0 -19px; font: 18px/20px Inter, sans-serif; color: #888; letter-spacing: -.4px; }
.v-tray .v-note { position: absolute; left: 262px; top: 13px; width: 18px; height: 18px; margin: 0; }
.shade-top { position: absolute; inset: 0 0 auto; height: 112px; background: linear-gradient(rgba(20,22,26,.82), rgba(20,22,26,.63) 30%, rgba(20,22,26,.22) 64%, rgba(20,22,26,0)); }
.shade-bottom { position: absolute; inset: auto 0 0; height: 74px; background: linear-gradient(transparent, rgba(10,12,18,.36) 52%, rgba(10,12,18,.76) 92%); }
.title { position: absolute; left: 23px; top: 20px; margin: 0; font: 400 22px/28px Inter, sans-serif; letter-spacing: .02px; color: #fff; }
.cursor { position: absolute; left: 720px; top: 461px; width: 14px; height: 22px; }
.side { position: absolute; top: 391px; width: 27px; height: 46px; background: #111214; display: flex; align-items: center; justify-content: center; }
.side svg { width: 11px; height: 15px; }
.prev { left: 0; } .next { right: 0; }
.controls { position: absolute; inset: auto 0 0; height: 56px; }
.track { position: relative; display: flex; width: 1470px; height: 7px; margin: 2px 0 0 11px; }
.played { width: 358px; background: #a435f0; } .loaded { width: 185px; background: #6a6f73; } .rest { flex: 1; background: #f7f7f8; }
.mk { position: absolute; top: -2px; width: 6px; height: 13px; background: #3e4143; }
.m1 { left: 3px; } .m2 { left: 118px; } .m3 { left: 901px; } .m4 { left: 1163px; }
.buttons { display: flex; align-items: center; height: 22px; margin-top: 13px; padding-left: 22px; font: bold 14px Inter, sans-serif; color: #fff; }
.pause { width: 12px; height: 16px; margin-right: 23px; }
.rew { width: 17px; height: 21px; }
.speed { width: 47px; height: 19px; margin: 0 12px 0 11px; background: #f7f9fa; color: #1c1d1f; display: flex; align-items: center; justify-content: center; }
.speed .t { letter-spacing: -.8px; }
.time { margin-left: 16px; letter-spacing: -.55px; }
.right { margin: 0 18px 0 auto; display: flex; gap: 18px; }
.right svg { width: 19px; height: 20px; }

.taskbar { height: 50px; flex: none; display: flex; background: linear-gradient(90deg, #c9dfe5 0, #cfe3e7 5%, #e0e5dd 8%, #d0e1e7 14%, #cfdfe7 30%, #d0dce8 45%, #cddfe6 60%, #cfdde4 80%, #d4dfe4 100%); color: #111; }
.apps { display: flex; }
.apps span { width: 60px; height: 50px; display: flex; align-items: center; justify-content: center; position: relative; }
.apps .wide { width: 62px; }
.apps span:nth-child(5) { margin-left: 3px; }
.apps svg { width: 30px; height: 30px; }
.apps .run::after { content: ""; position: absolute; left: 6px; right: 5px; bottom: 0; height: 3px; background: #0078d7; }
.apps .cur { background: rgba(255,255,255,.62); }
.apps .cur::after { left: 0; right: 0; }
.tray { margin-left: auto; display: flex; align-items: center; }
.moon { width: 28px; height: 34px; margin-right: 11px; }
.temp { width: 48px; font-size: 17.500px; letter-spacing: -.4px; } .clear { width: 127px; font-size: 17.500px; letter-spacing: -.2px; }
.s16 { width: 16px; height: 16px; margin-right: 13px; }
.s18 { width: 17px; height: 20px; margin-right: 11px; }
.s20 { width: 20px; height: 20px; margin-right: 10px; }
.net { margin-right: 14px; }
.s22 { width: 21px; height: 18px; margin-right: 13px; }
.eng { width: 35px; font-size: 14.500px; letter-spacing: -.5px; }
.clock { width: 94px; margin-right: 3px; display: flex; flex-direction: column; align-items: center; line-height: 23px; font-size: 14.500px; }
.c1 { letter-spacing: -.4px; } .c2 { letter-spacing: 0; }
.notif { width: 56px; height: 50px; position: relative; padding: 14px 0 0 11px; }
.notif svg { width: 20px; height: 20px; color: #000; }
.notif b { position: absolute; left: 21px; top: 25px; width: 20px; height: 20px; border: 1px solid #777; border-radius: 50%; background: #d5dde1; font: 500 14px/18px "Open Sans", sans-serif; text-align: center; }
.peek { width: 6px; height: 50px; border-left: 1px solid #9aa7ad; }
```
